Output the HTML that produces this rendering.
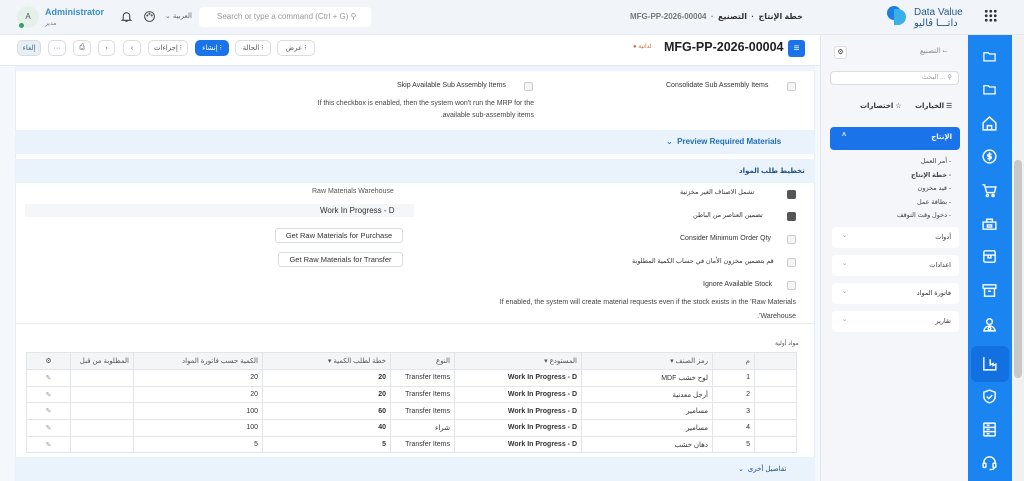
<!DOCTYPE html>
<html><head><meta charset="utf-8"><style>
*{box-sizing:border-box;margin:0;padding:0}
body{width:1024px;height:481px;overflow:hidden;background:#f4f7fb;font-family:"Liberation Sans","DejaVu Sans",sans-serif;font-size:8px;color:#333;position:relative}
.a{position:absolute}
.btn{position:absolute;top:40px;height:16px;border:1px solid #d8dde3;border-radius:5px;background:#fff;font-size:7px;color:#555;display:flex;align-items:center;justify-content:center}
.cb{position:absolute;width:9px;height:9px;border:1px solid #ccc;border-radius:2px;background:#f5f5f5}
.cb.on{background:#555;border-color:#555}
.r{text-align:right}
table{border-collapse:collapse;font-size:7px;table-layout:fixed}
td,th{border:1px solid #e2e6ea;height:16.7px;padding:0 4px;text-align:right;white-space:nowrap;overflow:hidden}
th{background:#f3f5f7;font-weight:normal;color:#555;height:17px}
td.b{font-weight:bold}
.sb svg{position:absolute;left:13px}
.m{position:absolute;left:832px;width:127px;height:21px;background:#fff;border-radius:4px;font-size:6.5px;color:#333}
</style></head><body>
<div class="a" style="left:0;top:0;width:1024px;height:35px;background:#f1f5f9;border-bottom:1px solid #e3e8ee"></div>
<div class="a" style="left:17px;top:6px;width:22px;height:22px;border-radius:50%;background:#e6f0ea;font-size:8px;text-align:center;line-height:22px;color:#555">A</div>
<div class="a" style="left:19px;top:23px;width:5px;height:5px;border-radius:50%;background:#38a169"></div>
<div class="a" style="left:45px;top:7px;font-size:9px;font-weight:bold;color:#3a8fc7">Administrator</div>
<div class="a" style="left:45px;top:20px;font-size:6px;color:#777">مدير</div>
<svg class="a" style="left:120px;top:10px" width="13" height="13" viewBox="0 0 24 24" fill="none" stroke="#444" stroke-width="2"><path d="M6 17V11a6 6 0 0112 0v6l2 2H4zM10 21h4"/></svg>
<svg class="a" style="left:143px;top:10px" width="13" height="13" viewBox="0 0 24 24" fill="none" stroke="#555" stroke-width="2"><circle cx="12" cy="12" r="9"/><circle cx="8" cy="10" r="1"/><circle cx="12" cy="7" r="1"/><circle cx="16" cy="10" r="1"/></svg>
<div class="a" style="left:165px;top:12px;font-size:7px;color:#666">⌄ العربية</div>
<div class="a" style="left:199px;top:7px;width:172px;height:20px;background:#fff;border-radius:4px;font-size:8px;color:#999;line-height:20px;padding-left:18px">Search or type a command (Ctrl + G) ⚲</div>
<div class="a" style="left:630px;top:12px;font-size:8px;color:#777;font-weight:bold">MFG-PP-2026-00004 &nbsp;·&nbsp; <span style="color:#333">خطة الإنتاج &nbsp;·&nbsp; التصنيع</span></div>
<svg class="a" style="left:886px;top:5px" width="22" height="24" viewBox="0 0 22 24"><circle cx="8" cy="8" r="7" fill="#1a7fe0"/><path d="M8 4h4a8 8 0 010 16H8z" fill="#3ab0e6"/></svg>
<div class="a" style="left:914px;top:7px;font-size:10px;color:#2a5a8a;line-height:11px">Data Value<br>داتـــا ڤاليو</div>
<div class="a" style="left:984px;top:9px;width:13px;height:13px;background:radial-gradient(circle,#333 1.3px,transparent 1.6px) 0 0/4.5px 4.5px"></div>
<div class="a" style="left:0;top:35px;width:820px;height:31px;background:#fff;border-bottom:1px solid #e3e8ee"></div>
<div class="btn" style="left:17px;width:24px;background:#e8eef5;color:#4a6a8a">إلغاء</div>
<div class="btn" style="left:48px;width:18px">···</div>
<div class="btn" style="left:73px;width:18px">⎙</div>
<div class="btn" style="left:98px;width:17px">›</div>
<div class="btn" style="left:123px;width:18px">‹</div>
<div class="btn" style="left:148px;width:40px">إجراءات ⁝</div>
<div class="btn" style="left:195px;width:34px;background:#1a73e8;color:#fff;border-color:#1a73e8">إنشاء ⁝</div>
<div class="btn" style="left:235px;width:36px">الحالة ⁝</div>
<div class="btn" style="left:277px;width:38px">عرض ⁝</div>
<div class="a" style="left:633px;top:43px;font-size:6px;color:#d26a2e">● لدانية</div>
<div class="a" style="left:664px;top:40px;font-size:12.5px;font-weight:bold;color:#222">MFG-PP-2026-00004</div>
<div class="a" style="left:788px;top:40px;width:17px;height:17px;background:#1a73e8;border-radius:3px;color:#fff;font-size:10px;text-align:center;line-height:17px">≡</div>
<div class="a" style="left:820px;top:35px;width:148px;height:446px;background:#f4f6f9;border-left:1px solid #e3e8ee"></div>
<div class="a" style="left:834px;top:46px;width:13px;height:13px;border:1px solid #ddd;border-radius:3px;background:#fff;font-size:7px;text-align:center;line-height:11px">⚙</div>
<div class="a" style="left:920px;top:47px;font-size:7px;color:#888">التصنيع ⌙</div>
<div class="a" style="left:830px;top:71px;width:129px;height:14px;background:#fff;border:1px solid #d8dde3;border-radius:4px;font-size:6.5px;color:#999;text-align:right;padding-right:6px;line-height:12px">البحث ... ⚲</div>
<div class="a" style="left:915px;top:102px;font-size:7px;font-weight:bold">الخيارات ☰</div>
<div class="a" style="left:860px;top:102px;font-size:7px;font-weight:bold">اختصارات ☆</div>
<div class="a" style="left:830px;top:127px;width:130px;height:23px;background:#1a73e8;border-radius:4px;color:#fff;font-size:7px;font-weight:bold"><span class="a" style="right:8px;top:6px">الإنتاج</span><span class="a" style="left:12px;top:5px">˄</span></div>
<div class="a r" style="right:73px;top:155px;font-size:6.5px;line-height:13.5px;color:#444;direction:rtl">- أمر العمل<br><b>- خطة الإنتاج</b><br>- قيد مخزون<br>- بطاقة عمل<br>- دخول وقت التوقف</div>
<div class="m" style="top:227px"><span class="a" style="right:8px;top:6px">أدوات</span><span class="a" style="left:10px;top:4px;color:#999">⌄</span></div>
<div class="m" style="top:255px"><span class="a" style="right:8px;top:6px">اعدادات</span><span class="a" style="left:10px;top:4px;color:#999">⌄</span></div>
<div class="m" style="top:283px"><span class="a" style="right:8px;top:6px">فاتورة المواد</span><span class="a" style="left:10px;top:4px;color:#999">⌄</span></div>
<div class="m" style="top:311px"><span class="a" style="right:8px;top:6px">تقارير</span><span class="a" style="left:10px;top:4px;color:#999">⌄</span></div>
<div class="a sb" style="left:968px;top:35px;width:44px;height:446px;background:#1a84f0">
<div class="a" style="left:3px;top:311px;width:38px;height:36px;background:#1270e0;border-radius:6px"></div>
<svg style="top:14px" width="17" height="15" viewBox="0 0 24 24" fill="none" stroke="#fff" stroke-width="2"><path d="M3 6h7l2 2h9v11H3z"/></svg>
<svg style="top:47px" width="17" height="15" viewBox="0 0 24 24" fill="none" stroke="#fff" stroke-width="2"><path d="M3 6h7l2 2h9v11H3z"/></svg>
<svg style="top:80px" width="17" height="17" viewBox="0 0 24 24" fill="none" stroke="#fff" stroke-width="2"><path d="M3 11l9-8 9 8v10H3zM9 21v-6h6v6"/></svg>
<svg style="top:113px" width="17" height="17" viewBox="0 0 24 24" fill="none" stroke="#fff" stroke-width="2"><circle cx="12" cy="12" r="9"/><path d="M15 9h-4a1.5 1.5 0 000 3h2a1.5 1.5 0 010 3H9M12 6v12"/></svg>
<svg style="top:147px" width="17" height="17" viewBox="0 0 24 24" fill="none" stroke="#fff" stroke-width="2"><path d="M2 4h3l3 11h11l2-8H6"/><circle cx="9" cy="19" r="1.5"/><circle cx="17" cy="19" r="1.5"/></svg>
<svg style="top:180px" width="17" height="17" viewBox="0 0 24 24" fill="none" stroke="#fff" stroke-width="2"><path d="M3 10h18v10H3zM8 10V6h8v4M9 14h6v3H9z"/></svg>
<svg style="top:213px" width="17" height="17" viewBox="0 0 24 24" fill="none" stroke="#fff" stroke-width="2"><rect x="4" y="4" width="16" height="16" rx="2"/><path d="M4 10h16M10 10v4h4v-4"/></svg>
<svg style="top:247px" width="17" height="17" viewBox="0 0 24 24" fill="none" stroke="#fff" stroke-width="2"><path d="M3 4h18v5H3zM5 9v11h14V9M10 13h4"/></svg>
<svg style="top:281px" width="17" height="17" viewBox="0 0 24 24" fill="none" stroke="#fff" stroke-width="2"><circle cx="12" cy="8" r="4"/><path d="M4 21c1-5 4-7 8-7s7 2 8 7zM12 14l-2 4 2 3 2-3z"/></svg>
<svg style="top:320px" width="17" height="17" viewBox="0 0 24 24" fill="none" stroke="#fff" stroke-width="2"><path d="M4 3v18h17v-8l-4 2v-3l-4 2V6"/></svg>
<svg style="top:353px" width="17" height="17" viewBox="0 0 24 24" fill="none" stroke="#fff" stroke-width="2"><path d="M12 3l8 3v6c0 5-4 8-8 9-4-1-8-4-8-9V6z"/><path d="M8 12l3 3 5-5"/></svg>
<svg style="top:386px" width="17" height="17" viewBox="0 0 24 24" fill="none" stroke="#fff" stroke-width="2"><rect x="4" y="3" width="16" height="18" rx="1"/><path d="M4 9h16M4 15h16M8 6h4M8 12h4M8 18h4"/></svg>
<svg style="top:419px" width="17" height="17" viewBox="0 0 24 24" fill="none" stroke="#fff" stroke-width="2"><path d="M4 14v-2a8 8 0 0116 0v2"/><rect x="3" y="13" width="4" height="6" rx="1"/><rect x="17" y="13" width="4" height="6" rx="1"/><path d="M19 19c0 2-3 3-7 3"/></svg>
</div>
<div class="a" style="left:1012px;top:35px;width:12px;height:446px;background:#f1f1f1"></div>
<div class="a" style="left:1014px;top:160px;width:8px;height:218px;background:#c8c8c8;border-radius:4px"></div>
<div class="a" style="left:15px;top:66px;width:800px;height:415px;background:#fff;border-left:1px solid #e8ecf0;border-right:1px solid #e8ecf0"></div>
<div class="a" style="left:15px;top:66px;width:800px;height:5px;background:#eef4fb"></div>
<div class="cb" style="left:787px;top:82px"></div>
<div class="a" style="left:666px;top:82px;font-size:7px;color:#333">Consolidate Sub Assembly Items</div>
<div class="cb" style="left:524px;top:82px"></div>
<div class="a" style="left:397px;top:82px;font-size:7px;color:#333">Skip Available Sub Assembly Items</div>
<div class="a r" style="left:280px;width:254px;top:98px;font-size:7px;line-height:12px;color:#444">If this checkbox is enabled, then the system won't run the MRP for the <br>.available sub-assembly items</div>
<div class="a" style="left:15px;top:130px;width:800px;height:24px;background:#eaf3fc"></div>
<div class="a" style="left:666px;top:137px;font-size:8px;font-weight:bold;color:#1f6fb8">⌄ &nbsp;Preview Required Materials</div>
<div class="a" style="left:15px;top:159px;width:800px;height:24px;background:#eaf3fc"></div>
<div class="a" style="left:739px;top:167px;font-size:7px;font-weight:bold;color:#1f4f8a">تخطيط طلب المواد</div>
<div class="cb on" style="left:787px;top:190px"></div>
<div class="a" style="left:680px;top:188px;font-size:6.5px">تشمل الاصناف الغير مخزنية</div>
<div class="cb on" style="left:787px;top:212px"></div>
<div class="a" style="left:693px;top:211px;font-size:6.5px">تضمين العناصر من الباطن</div>
<div class="cb" style="left:787px;top:235px"></div>
<div class="a" style="left:680px;top:235px;font-size:7px">Consider Minimum Order Qty</div>
<div class="cb" style="left:787px;top:258px"></div>
<div class="a" style="left:632px;top:257px;font-size:6.5px">قم بتضمين مخزون الأمان في حساب الكمية المطلوبة</div>
<div class="cb" style="left:787px;top:281px"></div>
<div class="a" style="left:703px;top:281px;font-size:7px">Ignore Available Stock</div>
<div class="a r" style="left:440px;width:356px;top:296px;font-size:7px;line-height:14px;color:#444">If enabled, the system will create material requests even if the stock exists in the 'Raw Materials <br>.'Warehouse</div>
<div class="a" style="left:312px;top:188px;font-size:7px;color:#555">Raw Materials Warehouse</div>
<div class="a" style="left:25px;top:204px;width:389px;height:13px;background:#f5f6f7"></div>
<div class="a" style="left:320px;top:206px;font-size:8px;color:#333">Work In Progress - D</div>
<div class="a" style="left:275px;top:228px;width:128px;height:15px;border:1px solid #d8dde3;border-radius:3px;font-size:7.5px;text-align:center;line-height:13px">Get Raw Materials for Purchase</div>
<div class="a" style="left:278px;top:252px;width:125px;height:15px;border:1px solid #d8dde3;border-radius:3px;font-size:7.5px;text-align:center;line-height:13px">Get Raw Materials for Transfer</div>
<div class="a" style="left:15px;top:323px;width:800px;height:1px;background:#e8ecf0"></div>
<div class="a" style="left:775px;top:340px;font-size:6px;color:#555">مواد أولية</div>
<table class="a" style="left:26px;top:352px;width:770px;direction:rtl">
<colgroup><col style="width:42px"><col style="width:42px"><col style="width:131px"><col style="width:127px"><col style="width:64px"><col style="width:128px"><col style="width:129px"><col style="width:63px"><col style="width:44px"></colgroup>
<tr><th></th><th>م</th><th>رمز الصنف ▾</th><th>المستودع ▾</th><th>النوع</th><th>خطة لطلب الكمية ▾</th><th>الكمية حسب فاتورة المواد</th><th>المطلوبة من قبل</th><th style="text-align:center">⚙</th></tr>
<tr><td></td><td>1</td><td>لوح خشب MDF</td><td class="b">Work In Progress - D</td><td>Transfer Items</td><td class="b">20</td><td>20</td><td></td><td style="text-align:center;color:#999">✎</td></tr>
<tr><td></td><td>2</td><td>أرجل معدنية</td><td class="b">Work In Progress - D</td><td>Transfer Items</td><td class="b">20</td><td>20</td><td></td><td style="text-align:center;color:#999">✎</td></tr>
<tr><td></td><td>3</td><td>مسامير</td><td class="b">Work In Progress - D</td><td>Transfer Items</td><td class="b">60</td><td>100</td><td></td><td style="text-align:center;color:#999">✎</td></tr>
<tr><td></td><td>4</td><td>مسامير</td><td class="b">Work In Progress - D</td><td>شراء</td><td class="b">40</td><td>100</td><td></td><td style="text-align:center;color:#999">✎</td></tr>
<tr><td></td><td>5</td><td>دهان خشب</td><td class="b">Work In Progress - D</td><td>Transfer Items</td><td class="b">5</td><td>5</td><td></td><td style="text-align:center;color:#999">✎</td></tr>
</table>
<div class="a" style="left:15px;top:457px;width:800px;height:24px;background:#eaf3fc"></div>
<div class="a" style="left:738px;top:465px;font-size:7px;color:#1f4f8a">⌄ &nbsp;تفاصيل أخرى</div>
</body></html>
